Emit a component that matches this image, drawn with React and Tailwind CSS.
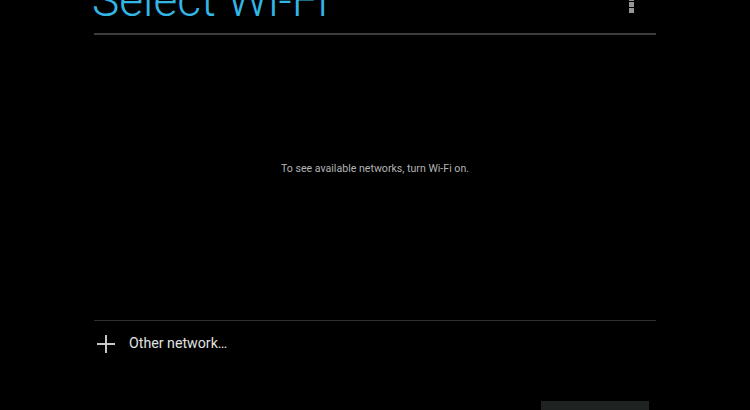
import React from 'react';

// Wi-Fi setup screen (Wi-Fi turned off)
const App = () => {
  return (
    <div className="w-[750px] h-[410px] bg-black overflow-hidden font-['Roboto',sans-serif]">
      <div className="ml-[94px] w-[562px] flex flex-col">
        {/* Header */}
        <div className="h-[33px] flex justify-between">
          <h1 className="-mt-[23px] -ml-[2px] text-[46px] leading-[46px] font-light text-[#33b5e5] whitespace-nowrap">
            Select Wi-Fi
          </h1>
          <div className="-mt-[4px] mr-[22px] flex flex-col gap-px">
            <span className="w-[5px] h-[5px] bg-[#959595]" />
            <span className="w-[5px] h-[5px] bg-[#959595]" />
            <span className="w-[5px] h-[5px] bg-[#959595]" />
          </div>
        </div>
        <div className="h-[2px] bg-[#3c3c3c]" />

        {/* Empty state */}
        <div className="h-[285px] pb-[17px] flex items-center justify-center">
          <p className="text-[10.6px] text-[#b4b4b4]">To see available networks, turn Wi-Fi on.</p>
        </div>
        <div className="h-px bg-[#2f2f2f]" />

        {/* Other network */}
        <div className="h-[46px] flex items-center">
          <svg className="ml-[3px]" width="18" height="18" viewBox="0 0 18 18">
            <path d="M9 0v18M0 9h18" stroke="#c8c8c8" strokeWidth="2" />
          </svg>
          <span className="ml-[14px] text-[14.2px] text-[#e2e2e2]">Other network…</span>
        </div>

        {/* Bottom button (cut off) */}
        <div className="mt-[34px] flex justify-end">
          <div className="mr-[7px] w-[108px] h-[36px] bg-[#1e2220]" />
        </div>
      </div>
    </div>
  );
};

export default App;
